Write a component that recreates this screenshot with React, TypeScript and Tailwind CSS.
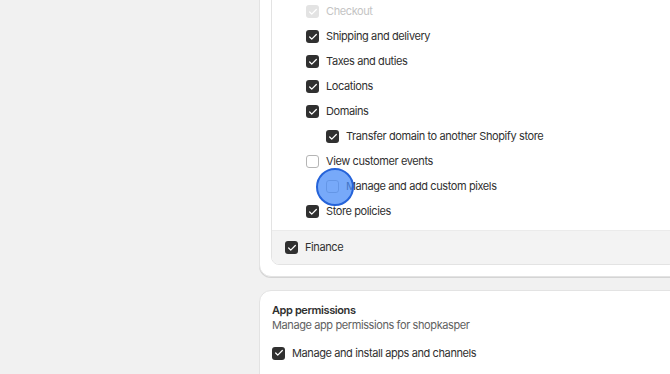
import { Check } from 'lucide-react'

type Row = { label: string; level: 0 | 1; checked: boolean; disabled?: boolean }

const rows: Row[] = [
  { label: 'Checkout', level: 0, checked: true, disabled: true },
  { label: 'Shipping and delivery', level: 0, checked: true },
  { label: 'Taxes and duties', level: 0, checked: true },
  { label: 'Locations', level: 0, checked: true },
  { label: 'Domains', level: 0, checked: true },
  { label: 'Transfer domain to another Shopify store', level: 1, checked: true },
  { label: 'View customer events', level: 0, checked: false },
  { label: 'Manage and add custom pixels', level: 1, checked: false },
  { label: 'Store policies', level: 0, checked: true },
]

function Box({ checked, disabled }: { checked: boolean; disabled?: boolean }) {
  if (disabled) {
    return (
      <span className="flex h-[13px] w-[13px] shrink-0 items-center justify-center rounded-[3px] bg-[#e3e3e3] text-white">
        <Check size={10} strokeWidth={3} />
      </span>
    )
  }
  if (checked) {
    return (
      <span className="flex h-[13px] w-[13px] shrink-0 items-center justify-center rounded-[3px] bg-[#303030] text-white">
        <Check size={10} strokeWidth={3} />
      </span>
    )
  }
  return <span className="h-[13px] w-[13px] shrink-0 rounded-[3px] border border-[#b5b5b5] bg-white" />
}

export default function App() {
  return (
    <main className="h-[374px] w-[670px] overflow-hidden bg-[#f1f1f1] pl-[259px] font-['Inter',sans-serif] text-[11px] tracking-[-0.4px] text-[#303030]">
      <div className="w-[430px]">
        <section className="-mt-[24px] rounded-xl border border-[#e3e3e3] bg-white p-[11px] shadow-[0_1px_0_#d4d4d4]">
          <div className="overflow-hidden rounded-lg border border-[#e3e3e3]">
            <div className="pb-[6px] pl-[34px] pt-[10px]">
              {rows.map((r) => (
                <div
                  key={r.label}
                  className={`relative flex h-[25px] items-center gap-[7px] ${r.level === 1 ? 'pl-5' : ''}`}
                >
                  <Box checked={r.checked} disabled={r.disabled} />
                  <span className={r.disabled ? 'text-[#c4c4c4]' : ''}>{r.label}</span>
                  {r.label === 'Manage and add custom pixels' && (
                    <span className="absolute left-[10px] top-[-6.5px] h-[38px] w-[38px] rounded-full border-2 border-[#2563d9] bg-[#4a8cf7]/75" />
                  )}
                </div>
              ))}
            </div>
            <div className="flex h-[34px] items-center gap-[7px] border-t border-[#ebebeb] bg-[#f3f3f3] pl-[13px]">
              <Box checked />
              <span>Finance</span>
            </div>
          </div>
        </section>

        <section className="mt-[13px] rounded-xl border border-[#e3e3e3] bg-white px-3 pb-8 pt-[11px]">
          <h2 className="font-semibold leading-4">App permissions</h2>
          <p className="leading-[14px] text-[#616161]">Manage app permissions for shopkasper</p>
          <div className="mt-[11px] flex items-center gap-[7px] leading-5">
            <Box checked />
            <span>Manage and install apps and channels</span>
          </div>
        </section>
      </div>
    </main>
  )
}
